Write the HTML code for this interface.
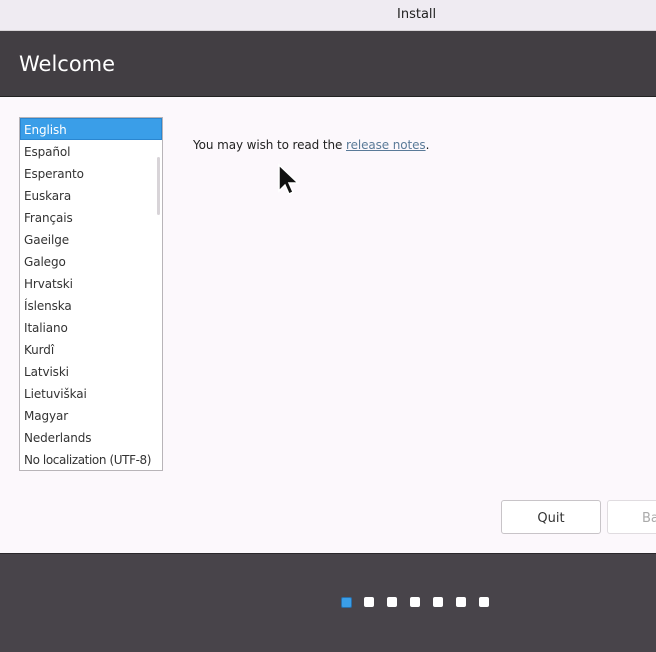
<!DOCTYPE html>
<html><head><style>
body{margin:0;width:656px;height:651px;overflow:hidden;background:#fcf8fc;font-family:"DejaVu Sans","Liberation Sans",sans-serif;position:relative}
.t{position:absolute;left:0;top:0;width:656px;height:30px;background:#efebf2;border-bottom:1px solid #d8d4d8}
.t span{position:absolute;left:397px;top:7px;font-size:13px;color:#222}
.h{position:absolute;left:0;top:31px;width:656px;height:65px;background:#423e43;border-bottom:1px solid #222}
.h span{position:absolute;left:19px;top:21px;font-size:21px;color:#fff}
.list{position:absolute;left:19px;top:117px;width:142px;height:352px;border:1px solid #b8b4b8;background:#fff;overflow:hidden}
.list div{height:22px;line-height:24px;padding-left:4px;font-size:12px;color:#333;white-space:nowrap;letter-spacing:-0.1px}
.list .s{background:#3a9ee8;color:#fff;border:1px solid #2a86d0;height:20px;line-height:22px;padding-left:3px}
.sb{position:absolute;left:157px;top:157px;width:3px;height:58px;background:#d8d4d8;border-radius:2px}
.txt{position:absolute;left:193px;top:138px;font-size:12px;color:#222;letter-spacing:-0.1px}
.txt a{color:#5a7a98;text-decoration:underline}
.btn{position:absolute;top:500px;height:32px;border:1px solid #c8c4c8;border-radius:3px;background:#fff;font-size:13px;color:#333;text-align:center;line-height:35px}
.f{position:absolute;left:0;top:553px;width:656px;height:98px;background:#48444a;border-top:1px solid #2a272b}
.d{position:absolute;top:597px;width:10px;height:10px;background:#fff;border-radius:2px}
</style></head><body>
<div class="t"><span>Install</span></div>
<div class="h"><span>Welcome</span></div>
<div class="list">
<div class="s">English</div><div>Español</div><div>Esperanto</div><div>Euskara</div><div>Français</div><div>Gaeilge</div><div>Galego</div><div>Hrvatski</div><div>Íslenska</div><div>Italiano</div><div>Kurdî</div><div>Latviski</div><div>Lietuviškai</div><div>Magyar</div><div>Nederlands</div><div style="letter-spacing:-0.4px">No localization (UTF-8)</div>
</div>
<div class="sb"></div>
<div class="txt">You may wish to read the <a>release notes</a>.</div>
<svg style="position:absolute;left:277px;top:163px" width="26" height="34"><path d="M2 2 L2 28 L8 22 L12 31 L16 29 L12 20 L21 20 Z" fill="#111" stroke="#fff" stroke-width="1.5"/></svg>
<div class="btn" style="left:501px;width:98px">Quit</div>
<div class="btn" style="left:607px;width:60px;color:#aaa;text-align:left;padding-left:34px;border-color:#e0dce0">Ba</div>
<div class="f"></div>
<div class="d" style="left:341px;background:#3a9ee8;border:1px solid #2a6ea8;width:9px;height:9px"></div>
<div class="d" style="left:364px"></div><div class="d" style="left:387px"></div><div class="d" style="left:410px"></div><div class="d" style="left:433px"></div><div class="d" style="left:456px"></div><div class="d" style="left:479px"></div>
</body></html>
